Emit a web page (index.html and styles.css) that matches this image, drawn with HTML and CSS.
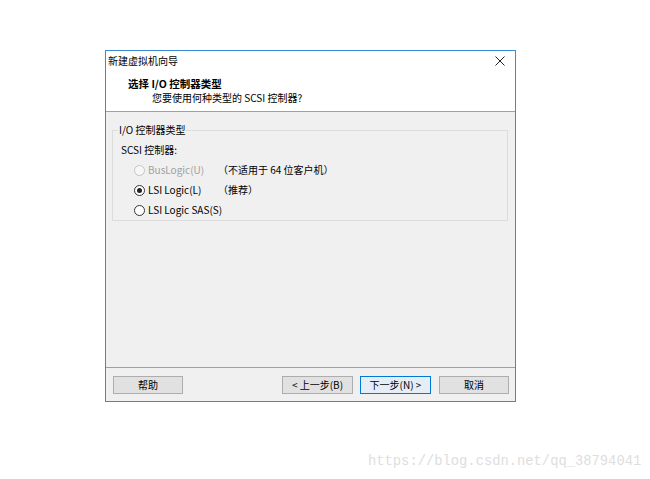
FILE: index.html
```html
<!DOCTYPE html>
<html lang="zh-CN">
<head>
<meta charset="utf-8">
<title>新建虚拟机向导</title>
<link rel="stylesheet" href="styles.css">
</head>
<body>
<div class="page">
  <div class="window">
    <div class="titlebar">
      <span class="title">新建虚拟机向导</span>
      <svg class="close" width="10" height="10" viewBox="0 0 10 10"><path d="M0.5 0.5 L9.5 9.5 M9.5 0.5 L0.5 9.5" stroke="#222" stroke-width="1" fill="none"/></svg>
    </div>
    <div class="header">
      <div class="heading">选择 I/O 控制器类型</div>
      <div class="subtitle">您要使用何种类型的 SCSI 控制器?</div>
    </div>
    <div class="main">
      <fieldset class="group">
        <legend class="legend">I/O 控制器类型</legend>
        <div class="label">SCSI 控制器:</div>
        <div class="options">
          <div class="opt disabled"><span class="radio"></span>BusLogic(U)</div>
          <div class="note">（不适用于 64 位客户机）</div>
          <div class="opt"><span class="radio checked"></span>LSI Logic(L)</div>
          <div class="note">（推荐）</div>
          <div class="opt"><span class="radio"></span>LSI Logic SAS(S)</div>
          <div class="note"></div>
        </div>
      </fieldset>
    </div>
    <div class="footer">
      <button class="btn help">帮助</button>
      <div class="nav">
        <button class="btn">&lt; 上一步(B)</button>
        <button class="btn default">下一步(N) &gt;</button>
        <button class="btn cancel">取消</button>
      </div>
    </div>
  </div>
  <div class="watermark">https://blog.csdn.net/qq_38794041</div>
</div>
</body>
</html>
```
FILE: styles.css
```css
html, body {
  margin: 0;
  padding: 0;
  background: #ffffff;
}
body {
  font-family: "Noto Sans CJK SC", "Microsoft YaHei", sans-serif;
  font-size: 10px;
  color: #000;
}
.page {
  padding-top: 50px;
  padding-left: 105px;
}
.window {
  width: 409px;
  height: 350px;
  border: 1px solid #3b8ad6;
  background: #f0f0f0;
  display: flex;
  flex-direction: column;
}
.titlebar {
  height: 19px;
  background: #fff;
  display: flex;
  align-items: center;
  justify-content: space-between;
  padding: 0 10px 0 2px;
  line-height: 14px;
}
.close {
  display: block;
  margin-top: 1px;
}
.header {
  background: #fff;
  border-bottom: 1px solid #a0a0a0;
  box-sizing: border-box;
  height: 42px;
  padding-top: 7px;
  line-height: 14px;
}
.heading {
  padding-left: 22px;
  font-weight: bold;
  font-size: 10.5px;
}
.subtitle {
  padding-left: 46px;
}
.main {
  height: 255px;
  box-sizing: border-box;
  padding: 11px 7px 0 6px;
}
.group {
  margin: 0;
  border: 1px solid #dcdcdc;
  padding: 3px 0 1px 8px;
  height: 98px;
  box-sizing: border-box;
}
.legend {
  margin-left: -3px;
  padding: 0 1px;
  line-height: 14px;
}
.label {
  line-height: 20px;
}
.options {
  display: grid;
  grid-template-columns: 84px 1fr;
  padding-left: 13px;
  line-height: 20px;
}
.opt {
  display: flex;
  align-items: center;
  white-space: nowrap;
}
.opt.disabled {
  color: #a0a0a0;
}
.radio {
  flex: none;
  width: 11px;
  height: 11px;
  box-sizing: border-box;
  border: 1px solid #333;
  border-radius: 50%;
  background: #fff;
  margin-right: 3px;
  display: flex;
  align-items: center;
  justify-content: center;
}
.disabled .radio {
  border-color: #c4c4c4;
  background: #f7f7f7;
}
.radio.checked::after {
  content: "";
  width: 5px;
  height: 5px;
  border-radius: 50%;
  background: #222;
}
.note {
  white-space: nowrap;
}
.footer {
  border-top: 1px solid #a0a0a0;
  flex: 1;
  display: flex;
  justify-content: space-between;
  align-items: flex-start;
  padding: 8px 6px 0 7px;
}
.nav {
  display: flex;
  gap: 7px;
}
.btn {
  font-family: "Noto Sans CJK SC", "Microsoft YaHei", sans-serif;
  font-size: 10px;
  height: 18px;
  width: 71px;
  padding: 0;
  margin: 0;
  line-height: 16px;
  background: #e1e1e1;
  border: 1px solid #adadad;
  color: #000;
}
.btn.help {
  width: 70px;
}
.btn.cancel {
  width: 70px;
  margin-left: 1px;
}
.btn.default {
  border-color: #0078d7;
  background: #e5eef7;
}
.watermark {
  margin-top: 52px;
  padding-left: 263px;
  font-family: "Liberation Mono", monospace;
  font-size: 13.8px;
  line-height: 16px;
  color: #dedede;
}
```
